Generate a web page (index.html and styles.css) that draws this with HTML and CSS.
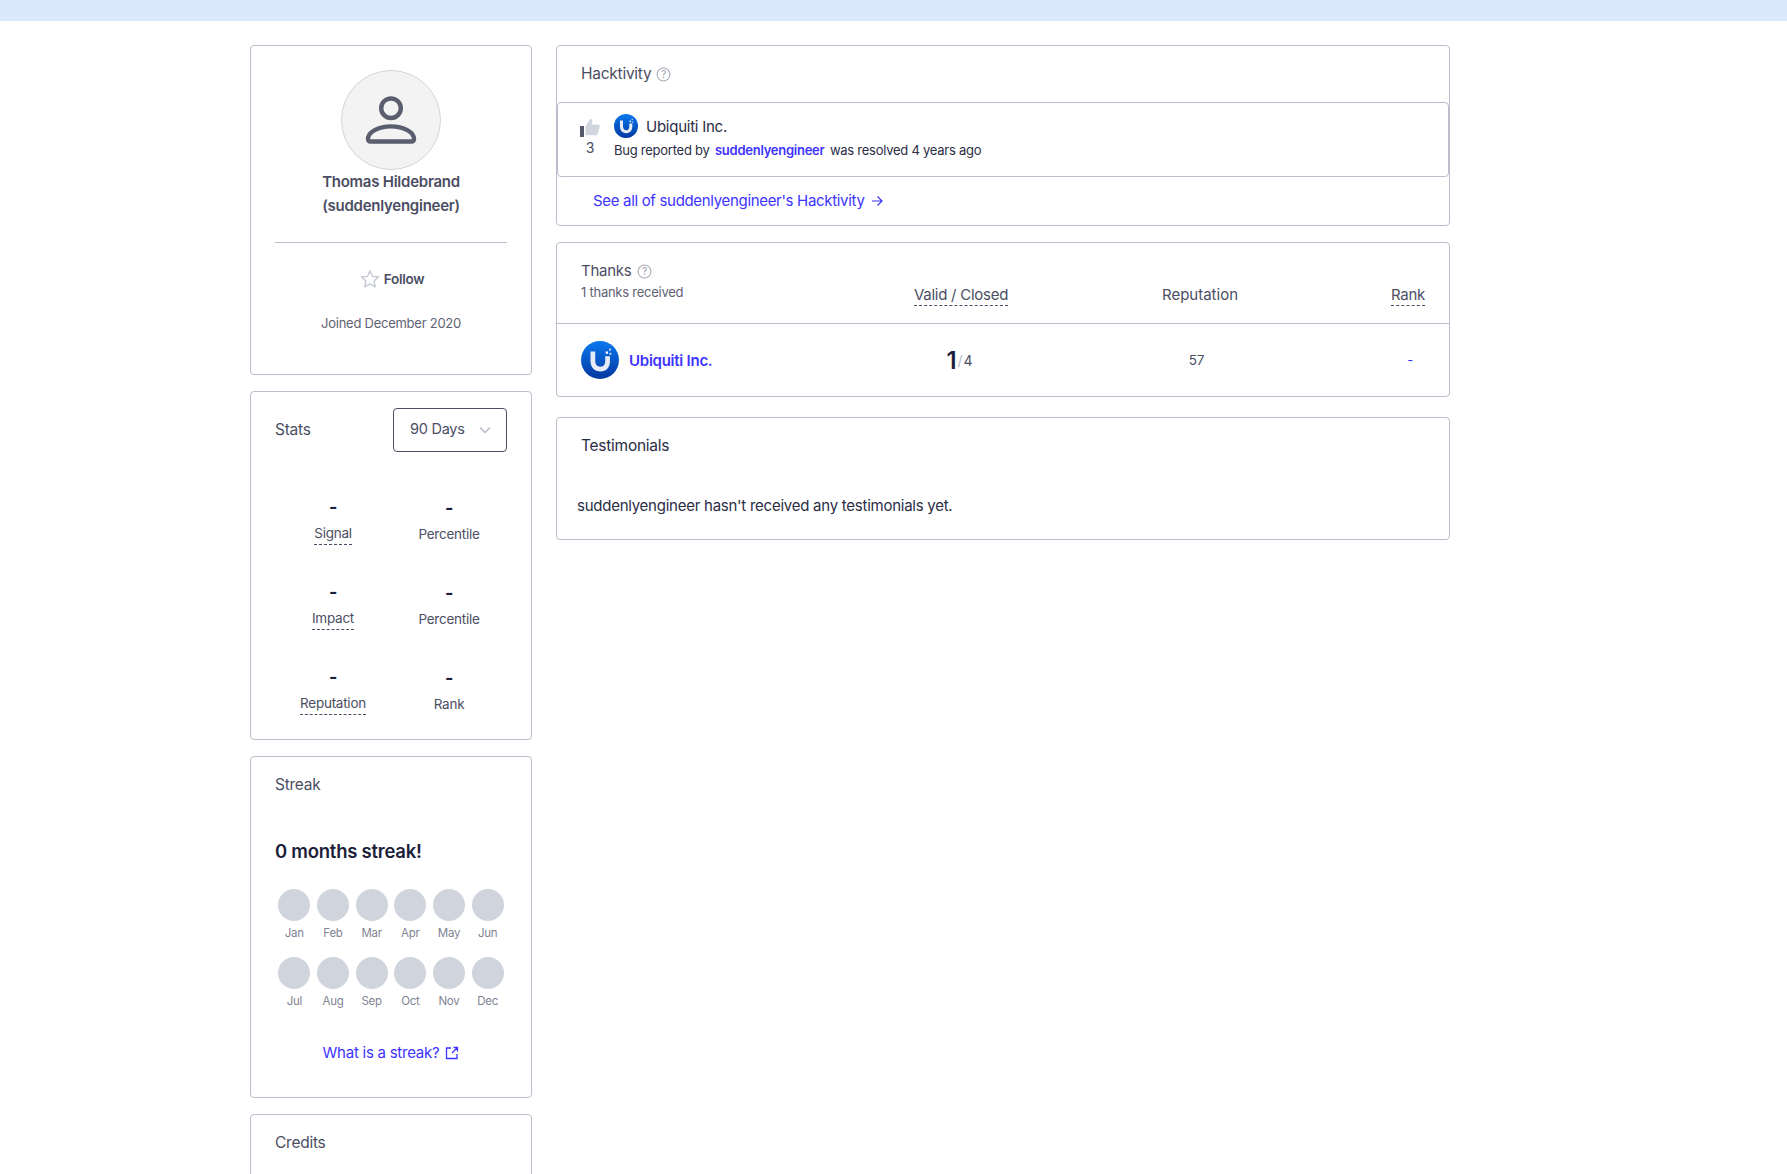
FILE: index.html
```html
<!DOCTYPE html>
<html lang="en">
  <head>
    <meta charset="UTF-8" />
    <meta name="viewport" content="width=device-width, initial-scale=1.0" />
    <title>suddenlyengineer</title>
    <link rel="stylesheet" href="styles.css">
  </head>

  <body>
    <div class="topbar"></div>

    <div class="page">
      <div class="side">
        <div class="card profile">
          <div class="avatar">
            <svg viewBox="0 0 100 100" width="98" height="98">
              <circle cx="50" cy="38" r="10" fill="none" stroke="#5b5e6e" stroke-width="4.5" />
              <path d="M29 72h42a2.5 2.5 0 0 0 2.5-2.5c0-7-10.500-13-23.500-13s-23.500 6-23.500 13a2.5 2.5 0 0 0 2.5 2.500z" fill="none" stroke="#5b5e6e" stroke-width="4.5" />
            </svg>
          </div>
          <div class="name">Thomas Hildebrand<br />(suddenlyengineer)</div>
          <div class="rule"></div>
          <div class="follow">
            <svg viewBox="0 0 20 20" width="20" height="20">
              <path d="M10 1.8l2.500 5.500 6 .7-4.500 4 1.300 5.900-5.300-3-5.300 3 1.300-5.900-4.500-4 6-.7z" fill="none" stroke="#c3c8d3" stroke-width="1.3" stroke-linejoin="round" />
            </svg>
            <span>Follow</span>
          </div>
          <div class="joined">Joined December 2020</div>
        </div>

        <div class="card stats">
          <div class="stats-head">
            <span class="card-title">Stats</span>
            <div class="select">
              <span>90 Days</span>
              <svg viewBox="0 0 12 8" width="12" height="8">
                <path d="M1 1.500l5 5 5-5" fill="none" stroke="#b4b8c4" stroke-width="1.3" />
              </svg>
            </div>
          </div>
          <div class="stats-grid">
            <div class="stat"><b>-</b><span class="dashed">Signal</span></div>
            <div class="stat low"><b>-</b><span>Percentile</span></div>
            <div class="stat"><b>-</b><span class="dashed">Impact</span></div>
            <div class="stat low"><b>-</b><span>Percentile</span></div>
            <div class="stat"><b>-</b><span class="dashed">Reputation</span></div>
            <div class="stat low"><b>-</b><span>Rank</span></div>
          </div>
        </div>

        <div class="card streak">
          <div class="card-title">Streak</div>
          <div class="streak-count">0 months streak!</div>
          <div class="months">
            <div class="month"><i></i>Jan</div>
            <div class="month"><i></i>Feb</div>
            <div class="month"><i></i>Mar</div>
            <div class="month"><i></i>Apr</div>
            <div class="month"><i></i>May</div>
            <div class="month"><i></i>Jun</div>
            <div class="month"><i></i>Jul</div>
            <div class="month"><i></i>Aug</div>
            <div class="month"><i></i>Sep</div>
            <div class="month"><i></i>Oct</div>
            <div class="month"><i></i>Nov</div>
            <div class="month"><i></i>Dec</div>
          </div>
          <a class="link streak-link">What is a streak?
            <svg viewBox="0 0 14 14" width="14" height="14">
              <path d="M6 2H1.500v10.500H12V8M7 7l5.500-5.500M8.500 1.500h4v4" fill="none" stroke="#3d33ff" stroke-width="1.3" />
            </svg>
          </a>
        </div>

        <div class="card credits">
          <div class="card-title">Credits</div>
        </div>
      </div>

      <div class="main">
        <div class="card hacktivity">
          <div class="hack-head">
            <span class="card-title">Hacktivity</span>
            <svg class="help" viewBox="0 0 14 14" width="15" height="15">
              <circle cx="7" cy="7" r="6" fill="none" stroke="#a9adba" />
              <text x="7" y="10" text-anchor="middle" font-size="9" fill="#989cab">?</text>
            </svg>
          </div>
          <div class="report">
            <div class="votes">
              <svg viewBox="0 0 20 19" width="20" height="19">
                <rect x="0" y="8" width="4" height="11" fill="#555868" />
                <path d="M5.500 8.500L10 1c1.800-.5 2.800 1 2.300 2.500L11.500 6.500H18c1.500 0 2 1.200 1.700 2.300l-1.900 7.200c-.3.800-1 1.300-1.800 1.300H5.500z" fill="#d1d5dd" />
              </svg>
              <span>3</span>
            </div>
            <div class="report-body">
              <div class="report-team">
                <svg class="logo" viewBox="0 0 40 40" width="24" height="24">
                  <defs>
                    <linearGradient id="ub1" x1="0" y1="0" x2="0" y2="1">
                      <stop offset="0" stop-color="#0a78ee" />
                      <stop offset="1" stop-color="#0238a0" />
                    </linearGradient>
                  </defs>
                  <circle cx="20" cy="20" r="20" fill="url(#ub1)" />
                  <path d="M10 11v10c0 7 4.500 11 10.500 11s10-4 10-11v-5h-5v5c0 4-2 6-5 6s-5.500-2-5.500-6V11z" fill="#e6ebf5" />
                  <rect x="26" y="11" width="2.500" height="2.500" fill="#fff" />
                  <rect x="29.500" y="8" width="2" height="2" fill="#cfe0fa" />
                  <rect x="30" y="12.500" width="2" height="2" fill="#cfe0fa" />
                </svg>
                <span>Ubiquiti Inc.</span>
              </div>
              <div class="report-text">Bug reported by <b>suddenlyengineer</b> was resolved 4 years ago</div>
            </div>
          </div>
          <a class="link see-all">See all of suddenlyengineer's Hacktivity
            <svg viewBox="0 0 12 12" width="12" height="12">
              <path d="M1 6h10M6.500 1.500L11 6l-4.500 4.500" fill="none" stroke="#3d33ff" stroke-width="1.2" />
            </svg>
          </a>
        </div>

        <div class="card thanks">
          <div class="thanks-row thanks-head">
            <div class="thanks-title">
              <div class="hack-head">
                <span class="card-title">Thanks</span>
                <svg class="help" viewBox="0 0 14 14" width="15" height="15">
                  <circle cx="7" cy="7" r="6" fill="none" stroke="#a9adba" />
                  <text x="7" y="10" text-anchor="middle" font-size="9" fill="#989cab">?</text>
                </svg>
              </div>
              <div class="thanks-sub">1 thanks received</div>
            </div>
            <span class="col dashed">Valid / Closed</span>
            <span class="col rep-head">Reputation</span>
            <span class="col dashed rank-head">Rank</span>
          </div>
          <div class="thanks-row thanks-team">
            <div class="team">
              <svg class="logo" viewBox="0 0 40 40" width="38" height="38">
                <circle cx="20" cy="20" r="20" fill="url(#ub1)" />
                <path d="M10 11v10c0 7 4.500 11 10.500 11s10-4 10-11v-5h-5v5c0 4-2 6-5 6s-5.500-2-5.500-6V11z" fill="#e6ebf5" />
                <rect x="26" y="11" width="2.500" height="2.500" fill="#fff" />
                <rect x="29.500" y="8" width="2" height="2" fill="#cfe0fa" />
                <rect x="30" y="12.500" width="2" height="2" fill="#cfe0fa" />
              </svg>
              <a class="team-name">Ubiquiti Inc.</a>
            </div>
            <div class="col score"><b>1</b><em>/</em>4</div>
            <div class="col rep">57</div>
            <div class="col rank">-</div>
          </div>
        </div>

        <div class="card testimonials">
          <div class="test-title">Testimonials</div>
          <p class="test-text">suddenlyengineer hasn't received any testimonials yet.</p>
        </div>
      </div>
    </div>
  </body>
</html>
```

FILE: styles.css
```css
html,
body {
  height: 100%;
  overflow: hidden;
}

body {
  margin: 0;
  font-family: Inter, "Noto Sans", sans-serif;
  font-size: 14px;
  letter-spacing: -0.25px;
  color: #4b4e63;
  background-color: white;
}

.topbar {
  height: 21px;
  background-color: #dce8fb;
}

.page {
  display: flex;
  gap: 24px;
  width: 1200px;
  margin: 24px 0 0 250px;
}

.side {
  width: 282px;
  flex-shrink: 0;
  display: flex;
  flex-direction: column;
  gap: 16px;
}

.main {
  width: 894px;
  display: flex;
  flex-direction: column;
}

.card {
  border: 1px solid #bcbecb;
  border-radius: 4px;
  box-sizing: border-box;
}

.card-title {
  font-size: 15.5px;
  line-height: 18px;
}

.link {
  color: #3d33ff;
  font-size: 15px;
}

.dashed {
  border-bottom: 1px dashed #4b4e63;
  padding-bottom: 2px;
}

/* profile */
.profile {
  height: 330px;
  padding: 24px 24px 0;
  text-align: center;
}

.avatar {
  width: 98px;
  height: 98px;
  margin: 0 auto;
  border: 1px solid #d1d5db;
  border-radius: 50%;
  background-color: #f3f3f3;
}

.name {
  font-size: 15px;
  font-weight: 600;
  line-height: 24px;
}

.rule {
  border-top: 1px solid #bcbecb;
  margin-top: 24px;
}

.follow {
  display: flex;
  justify-content: center;
  align-items: center;
  gap: 4px;
  margin-top: 26px;
  padding-left: 2px;
  font-size: 13.5px;
  font-weight: 600;
}

.joined {
  margin-top: 26px;
  font-size: 13px;
  color: #5f6274;
}

/* stats */
.stats {
  height: 349px;
  padding: 16px 24px 0;
}

.stats-head {
  display: flex;
  justify-content: space-between;
  align-items: center;
}

.select {
  width: 114px;
  height: 44px;
  box-sizing: border-box;
  padding: 0 15px 0 16px;
  display: flex;
  justify-content: space-between;
  align-items: center;
  border: 1px solid #4b4e63;
  border-radius: 4px;
  font-size: 14.5px;
}

.select span {
  padding-bottom: 3px;
}

.stats-grid {
  display: grid;
  grid-template-columns: 1fr 1fr;
  grid-auto-rows: 85px;
  margin-top: 43px;
}

.stat {
  display: flex;
  flex-direction: column;
  align-items: center;
  font-size: 13.5px;
}

.stat b {
  font-size: 18px;
  line-height: 24px;
  color: #1c1f3a;
}

.stat span {
  margin-top: 5px;
  line-height: 18px;
}

.stat.low {
  padding-top: 1px;
}

/* streak */
.streak {
  height: 342px;
  padding: 19px 24px 0;
}

.streak-count {
  margin-top: 46px;
  font-size: 18.5px;
  line-height: 22px;
  font-weight: 600;
  color: #1c1f3a;
}

.months {
  display: grid;
  grid-template-columns: repeat(6, 1fr);
  row-gap: 17px;
  margin-top: 27px;
}

.month {
  display: flex;
  flex-direction: column;
  align-items: center;
  gap: 5px;
  font-size: 11.5px;
  line-height: 14px;
  color: #7f8393;
}

.month i {
  width: 32px;
  height: 32px;
  border-radius: 50%;
  background-color: #d0d4dd;
}

.streak-link {
  display: flex;
  justify-content: center;
  align-items: center;
  gap: 6px;
  margin-top: 36px;
  font-size: 15px;
  line-height: 18px;
}

.credits {
  height: 200px;
  padding: 19px 24px 0;
}

/* hacktivity */
.hacktivity {
  height: 181px;
}

.hack-head {
  display: flex;
  align-items: center;
  gap: 5px;
}

.hacktivity > .hack-head {
  padding: 0 24px;
  height: 56px;
}

.report {
  display: flex;
  height: 75px;
  box-sizing: border-box;
  padding: 11px 22px;
  gap: 14px;
  border: 1px solid #bcbecb;
  border-radius: 4px;
}

.votes {
  display: flex;
  flex-direction: column;
  align-items: center;
  font-size: 14px;
}

.votes svg {
  margin-top: 4px;
}

.votes span {
  margin-top: 2px;
}

.report-team {
  display: flex;
  align-items: center;
  gap: 8px;
  font-size: 15px;
  color: #2b2d45;
}

.report-text {
  margin-top: 4px;
  font-size: 13px;
  color: #2b2d45;
}

.report-text b {
  color: #3d33ff;
  font-weight: 600;
  margin: 0 2px;
}

.see-all {
  display: flex;
  align-items: center;
  gap: 6px;
  padding: 14px 36px 0;
  font-size: 15px;
  letter-spacing: -0.32px;
}

/* thanks */
.thanks {
  height: 155px;
  margin-top: 16px;
}

.thanks-row {
  display: grid;
  grid-template-columns: 320px 120px 358px 46px;
  padding: 0 24px;
}

.thanks-head {
  height: 81px;
  align-items: end;
  padding-bottom: 17px;
  box-sizing: border-box;
  border-bottom: 1px solid #bcbecb;
}

.thanks-head .dashed {
  padding-bottom: 1px;
}

.thanks-title {
  align-self: start;
  padding-top: 19px;
}

.thanks-title .card-title {
  font-size: 15px;
}

.thanks-sub {
  margin-top: 5px;
  font-size: 13px;
  line-height: 15px;
  color: #5f6274;
}

.col {
  justify-self: center;
  font-size: 15px;
}

.rep-head {
  letter-spacing: 0;
  padding-bottom: 2px;
}

.rank-head {
  justify-self: end;
}

.thanks-team {
  height: 72px;
  align-items: center;
}

.team {
  display: flex;
  align-items: center;
  gap: 10px;
}

.team-name {
  color: #3d33ff;
  font-weight: 600;
  font-size: 15px;
}

.score {
  display: flex;
  align-items: center;
  font-size: 14px;
  letter-spacing: 0;
  color: #4b4e63;
  margin-right: 3px;
}

.score b {
  font-size: 24px;
  font-weight: 600;
  color: #1c1f3a;
}

.score em {
  font-style: normal;
  margin: 0 1px;
  color: #b4b8c4;
}

.rep {
  font-size: 13.5px;
  margin-right: 7px;
}

.rank {
  color: #3d33ff;
  font-size: 13px;
  margin-left: 16px;
}

/* testimonials */
.testimonials {
  height: 123px;
  margin-top: 20px;
}

.test-title {
  padding: 18px 24px 0;
  font-size: 15.5px;
  color: #2b2d45;
}

.test-text {
  margin: 41px 0 0 20px;
  font-size: 15px;
  color: #2b2d45;
}
```
